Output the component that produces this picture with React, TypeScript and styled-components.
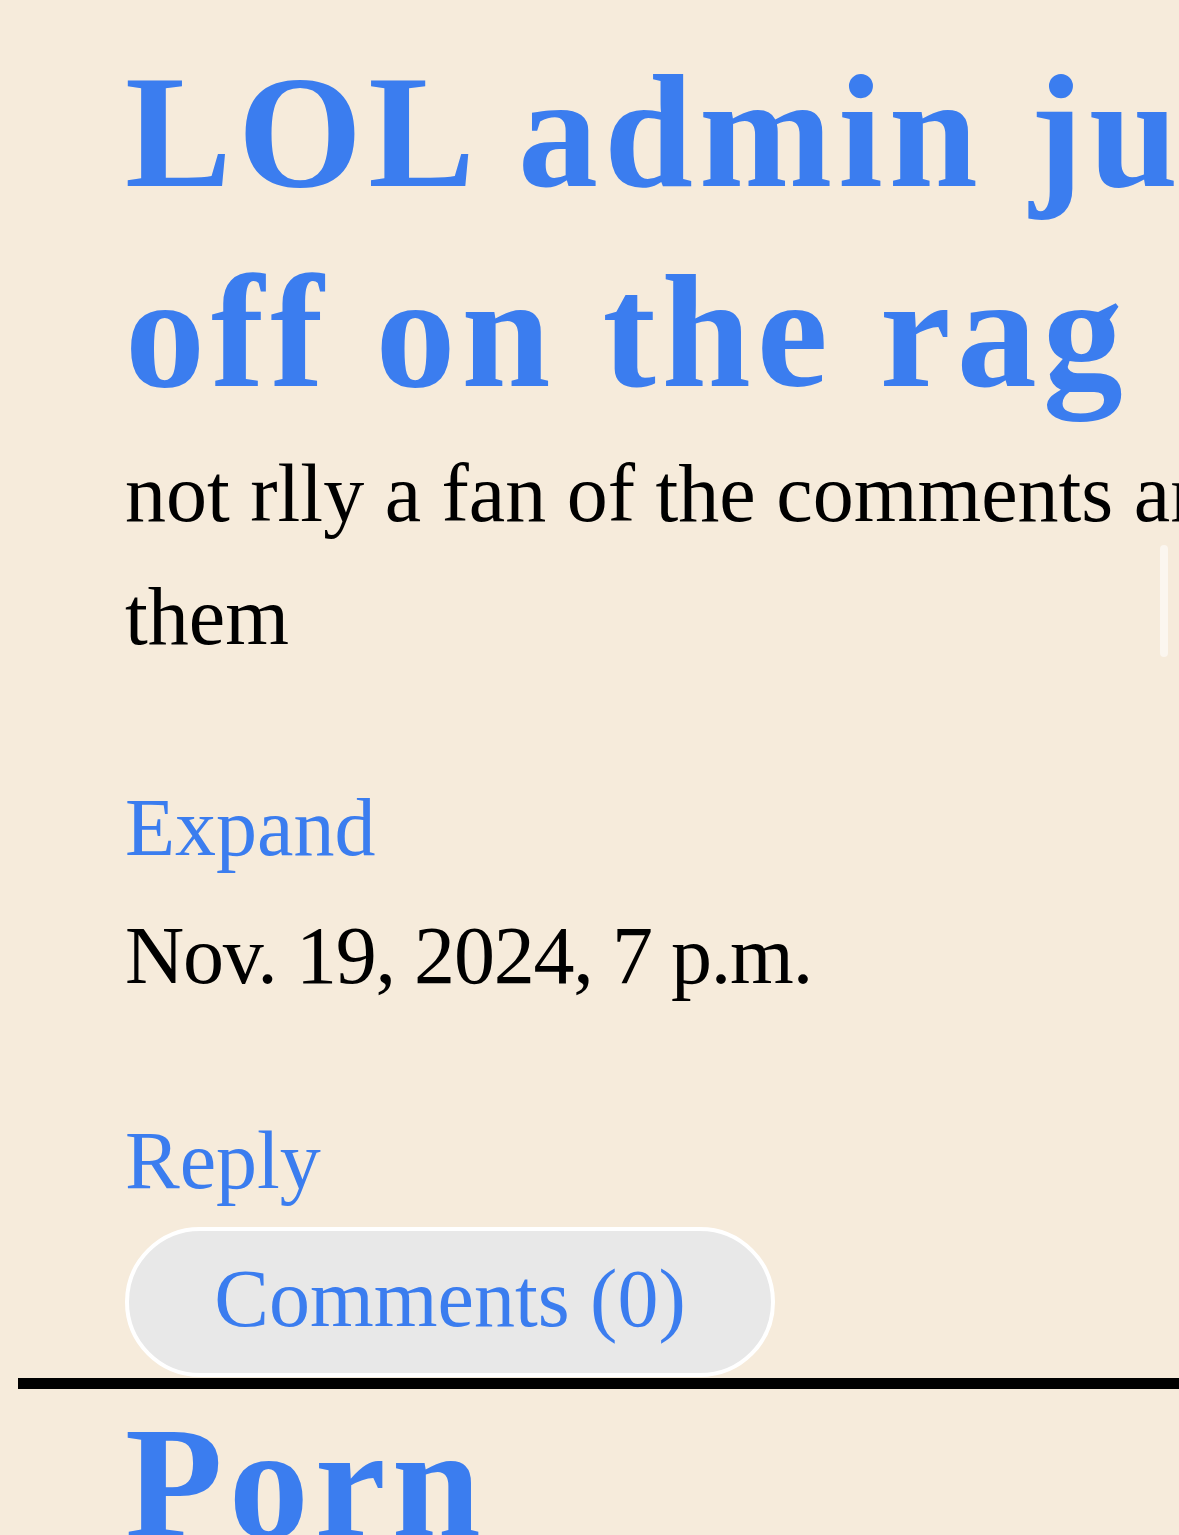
import React from "react";
import styled, { createGlobalStyle } from "styled-components";

const GlobalStyle = createGlobalStyle`
  html, body {
    margin: 0;
    padding: 0;
    background: #f6ebdb;
    overflow: hidden;
  }
  body {
    font-family: "Liberation Serif", "Times New Roman", serif;
    color: #000;
  }
`;

const Page = styled.main`
  width: 1900px;
  padding: 32px 0 0 18px;
  background: #f6ebdb;
  min-height: 1535px;
  box-sizing: border-box;
`;

const Post = styled.article`
  display: flex;
  flex-direction: column;
  align-items: flex-start;
  width: 1650px;
  padding-left: 107px;
`;

const Title = styled.a<{ $offset?: number }>`
  display: block;
  margin-top: ${(p) => p.$offset ?? 0}px;
  font-family: "Liberation Serif", "Times New Roman", serif;
  font-weight: 700;
  font-size: 160px;
  line-height: 200px;
  letter-spacing: 6px;
  color: #3b7def;
  text-decoration: none;
`;

const Body = styled.p`
  margin: 0;
  font-size: 82px;
  line-height: 123px;
  color: #000;
`;

const MetaLink = styled.a<{ $gap: number }>`
  display: block;
  margin-top: ${(p) => p.$gap}px;
  font-size: 82px;
  line-height: 128px;
  color: #3b7def;
  text-decoration: none;
`;

const Timestamp = styled.div`
  font-size: 82px;
  line-height: 128px;
  letter-spacing: -1.2px;
  color: #000;
`;

const CommentsButton = styled.button`
  margin-top: 2px;
  width: 650px;
  height: 150px;
  box-sizing: border-box;
  border: 4px solid #ffffff;
  border-radius: 75px;
  background: #e8e8e8;
  font-family: "Liberation Serif", "Times New Roman", serif;
  font-size: 82px;
  color: #3b7def;
  display: flex;
  align-items: center;
  justify-content: center;
  padding: 0 0 6px;
`;

const Divider = styled.hr`
  margin: 1px 0 0;
  border: none;
  height: 11px;
  background: #000;
  width: 100%;
`;

const ScrollThumb = styled.div`
  position: fixed;
  left: 1160px;
  top: 545px;
  width: 8px;
  height: 112px;
  border-radius: 4px;
  background: rgba(255, 255, 255, 0.55);
`;

export default function App() {
  return (
    <>
      <GlobalStyle />
      <Page>
        <Post>
          <Title href="#">LOL admin just went off on the rag</Title>
          <Body>not rlly a fan of the comments and deleted all of them</Body>
          <MetaLink href="#" $gap={86}>Expand</MetaLink>
          <Timestamp>Nov. 19, 2024, 7 p.m.</Timestamp>
          <MetaLink href="#" $gap={77}>Reply</MetaLink>
          <CommentsButton>Comments (0)</CommentsButton>
        </Post>
        <Divider />
        <Post>
          <Title href="#" $offset={-6}>Porn</Title>
        </Post>
      </Page>
      <ScrollThumb />
    </>
  );
}
